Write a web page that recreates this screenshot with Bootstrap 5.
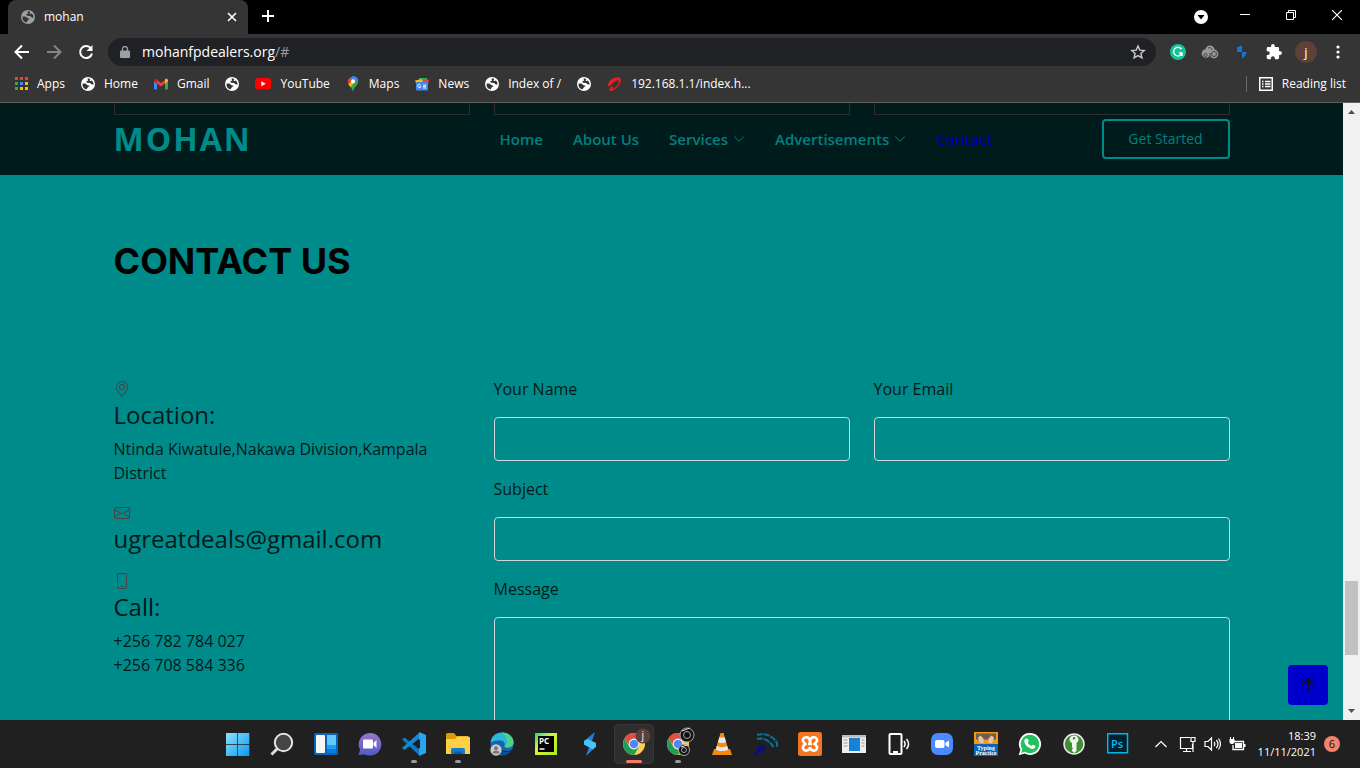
<!DOCTYPE html>
<html lang="en">
<head>
<meta charset="utf-8">
<meta name="viewport" content="width=device-width, initial-scale=1">
<title>mohan</title>
<link href="https://cdn.jsdelivr.net/npm/bootstrap@5.3.0/dist/css/bootstrap.min.css" rel="stylesheet">
<style>
:root{--teal:#008b8b;--chrome:#353535}
body{font-family:"Open Sans","Noto Sans",sans-serif;font-size:16px;line-height:24px;color:#001a1a;background:#202020}
.screen{height:100vh}
svg{flex:none;display:block}
button{color:inherit}
/* browser frame */
.ui{font-family:"Open Sans","Noto Sans",sans-serif;font-size:12px;line-height:16px;color:#fff}
.tabstrip{background:#000;height:34px}
.tab-item{background:var(--chrome);width:240px;height:34px;border-radius:8px 8px 0 0;padding:0 10px 0 13px;gap:9px}
.plain{background:none;border:0;padding:0;display:flex;align-items:center;justify-content:center}
.win{width:46px;height:30px}
.win.search{width:42px}
.toolbar{background:var(--chrome);height:36px;padding:0 6px}
.slot{width:32px;height:32px}
.omni{background:#202124;height:28px;border-radius:14px;font-size:14px;line-height:20px;padding:0 10px 0 12px;margin:0 6px}
.omni input{background:none;border:0;color:#fff;padding:0;width:133px;outline:0}
.omni span{color:#9aa0a6}
.bookmarks{background:var(--chrome);height:33px;border-bottom:1px solid #5f6060;padding:0 14px 4px}
.bookmarks a{color:#fff;text-decoration:none;gap:9px}
.marks{gap:16px}
.split{width:1px;height:16px;background:#6a6a6a}
.avatar{width:22px;height:22px;background:#5d4037;font-size:13px}
/* site */
.site{background:var(--teal)}
.site-head{background:#001b1b;height:72px}
.peek{height:12px;border:1px solid #332c2c;border-top:0}
.brand-name{font-size:32px;line-height:40px;font-weight:700;letter-spacing:2px;color:var(--teal);text-decoration:none}
.bar{padding:4px 0 16px}
.menu{gap:30px;padding-left:6px}
.menu a{font-size:15px;font-weight:600;color:#008080;text-decoration:none;gap:5px}
.menu a.active{color:#0000b0}
.start{border:2px solid var(--teal);border-radius:4px;width:128px;height:40px;font-size:14px;color:#008080;background:none}
.contact{padding-top:65px}
.contact h2{font-family:Inter,sans-serif;font-weight:700;font-size:36px;line-height:43px;color:#000;margin-bottom:94px}
.contact h4{font-size:24px;line-height:28px;font-weight:400;margin-bottom:8px}
.contact h4.alone{margin-bottom:16px}
.contact p{margin-bottom:16px}
.ico{height:24px;color:#444}
.contact label{margin-bottom:16px;display:block}
.contact .form-control{background:none;border:1px solid #ced4da;border-radius:4px;height:44px}
.contact textarea.form-control{height:240px}
.to-top{right:15px;bottom:15px;width:40px;height:40px;border-radius:4px;background:#0000cd;color:#111}
.scroll{width:17px;background:#f1f1f1}
.thumb{background:#c1c1c1;width:13px;flex:74 0 0}
/* taskbar */
.taskbar{background:#202020;height:48px;padding-right:4px}
.tray{margin-right:16px}
.clock{font-size:11px}
.side{flex:1 1 0;width:0}
.app{width:44px;height:48px}
.app.open::after{content:"";position:absolute;bottom:5px;width:6px;height:3px;border-radius:2px;background:#9a9a9a}
.app.now{background:#2d2d2d;border:1px solid #363636;border-radius:4px;width:40px;height:40px;margin:0 2px}
.app.now::after{content:"";position:absolute;bottom:0;width:16px;height:3px;border-radius:2px;background:#f47c64}
.note{width:16px;height:16px;background:#f7826a;color:#111;font-size:11px}
</style>
</head>
<body>
<svg width="0" height="0" class="position-absolute">
<defs>
<symbol id="globe" viewBox="0 0 14 14"><path fill-rule="evenodd" d="M7 0a7 7 0 1 0 0 14A7 7 0 0 0 7 0zM1.600 6.500 4 6.600c1 .1 1.600.7 1.900 1.300l1.900.6c.7.3.6 1-.1 1.300l-.5.3c-.7.3-.5 1-1.200 1.500l-.3 1A5.600 5.600 0 0 1 1.600 6.500zM6.300 1.700c1.100-.3 2.400 0 2.900.2l-.6 1.500c.5.8 1.400.6 2.200.1l.9 1c.7.9.9 2.100.8 3.100l-1.700-.2c-.8-.2-1-.9-1.800-1.300L6.400 5.800c-.9-.3-1.500-1-.8-1.600.6-.6 1.500-.3 1.600-1z"/></symbol>
<symbol id="down" viewBox="0 0 16 16"><path fill-rule="evenodd" d="M1.646 4.646a.5.5 0 0 1 .708 0L8 10.293l5.646-5.647a.5.5 0 0 1 .708.708l-6 6a.5.5 0 0 1-.708 0l-6-6a.5.5 0 0 1 0-.708z"/></symbol>
<symbol id="chromium" viewBox="0 0 24 24"><circle cx="12" cy="12" r="11" fill="#fdd04f"/><path fill="#dd5144" d="M12 12 2.500 6.500a11 11 0 0 1 19-.1z"/><path fill="#dd5144" d="M12 6.800h9.700L21 5.600A11 11 0 0 0 2.500 6.500l5 7.500z"/><path fill="#1e9e58" d="M2.500 6.500a11 11 0 0 0 9.500 16.500l5-8-5 2.200c-2 0-3.800-1-4.700-2.700z"/><circle cx="12" cy="12" r="5.400" fill="#f1f1f1"/><circle cx="12" cy="12" r="4.300" fill="#4c8bf5"/></symbol>
</defs>
</svg>
<div class="screen d-flex flex-column overflow-hidden">

<header class="ui flex-shrink-0">
  <div class="tabstrip d-flex ps-2">
    <div class="tab-item d-flex align-items-center">
      <svg width="14" height="14" fill="#9aa0a6"><use href="#globe"/></svg>
      <span class="flex-fill">mohan</span>
      <button class="plain" aria-label="Close tab"><svg width="12" height="12" stroke="#fff" stroke-width="1.600"><path d="M2 2l8 8M10 2l-8 8"/></svg></button>
    </div>
    <button class="plain slot ms-1" aria-label="New tab"><svg width="14" height="14" stroke="#fff" stroke-width="2"><path d="M7 1v12M1 7h12"/></svg></button>
    <div class="ms-auto d-flex">
      <button class="plain win search" aria-label="Search tabs"><svg width="14" height="18"><circle cx="7" cy="11" r="7" fill="#fff"/><path d="M3.500 9h7L7 13.500z" fill="#000"/></svg></button>
      <button class="plain win" aria-label="Minimize"><svg width="10" height="10"><path d="M0 4.500h10" stroke="#fff"/></svg></button>
      <button class="plain win" aria-label="Restore"><svg width="10" height="10" fill="none" stroke="#fff"><path d="M.5 2.500h7v7h-7zM2.500 2.500v-2h7v7h-2"/></svg></button>
      <button class="plain win" aria-label="Close window"><svg width="10" height="10" stroke="#fff" stroke-width="1.200"><path d="M0 0l10 10M10 0L0 10"/></svg></button>
    </div>
  </div>
  <div class="toolbar d-flex align-items-center">
    <button class="plain slot" aria-label="Back"><svg width="16" height="16" fill="none" stroke="#fff" stroke-width="2"><path d="M15 8H2M8 1.500 1.500 8 8 14.500"/></svg></button>
    <button class="plain slot" aria-label="Forward"><svg width="16" height="16" fill="none" stroke="#858585" stroke-width="2"><path d="M1 8h13M8 1.500 14.500 8 8 14.500"/></svg></button>
    <button class="plain slot" aria-label="Reload"><svg width="16" height="16" fill="none" stroke="#fff" stroke-width="2"><path d="M13 4.500A6 6 0 1 0 14 9.500"/><path d="M14.500 1v6h-6z" fill="#fff" stroke="none"/></svg></button>
    <div class="omni d-flex align-items-center flex-fill">
      <svg width="10" height="12" class="me-2"><path d="M1 4.500h8a1 1 0 0 1 1 1V11a1 1 0 0 1-1 1H1a1 1 0 0 1-1-1V5.500a1 1 0 0 1 1-1z" fill="#9aa0a6"/><path d="M2.500 5V3a2.500 2.500 0 0 1 5 0v2" fill="none" stroke="#9aa0a6" stroke-width="1.300"/></svg>
      <input class="ms-1" type="text" aria-label="Address" value="mohanfpdealers.org"><span>/#</span>
      <button class="plain ms-auto" aria-label="Bookmark this page"><svg width="16" height="16" viewBox="0 0 16 16" fill="none" stroke="#ccc" stroke-width="1.400"><path d="M8 2l1.800 4.100 4.400.4-3.300 3 1 4.400L8 11.600l-3.900 2.300 1-4.400-3.300-3 4.400-.4z"/></svg></button>
    </div>
    <div class="d-flex">
    <button class="plain slot" aria-label="Grammarly"><svg width="16" height="16"><circle cx="8" cy="8" r="8" fill="#15c39a"/><path d="M11.500 5.200A4.300 4.300 0 1 0 12 9H9M12 8.500V12" fill="none" stroke="#fff" stroke-width="1.400"/></svg></button>
    <button class="plain slot" aria-label="Extension"><svg width="18" height="14"><g fill="#999"><circle cx="9" cy="5" r="4.500"/><circle cx="5" cy="8.500" r="4.300"/><circle cx="13" cy="9" r="4.400"/></g><g fill="none" stroke="#444"><circle cx="13" cy="9" r="2.500"/><circle cx="4.500" cy="10" r="1.600"/><path d="M7 3c2-1 4 0 4 2M9 8v5"/></g></svg></button>
    <button class="plain slot" aria-label="Shield"><svg width="14" height="16"><path d="M1 2.500 7 .5l6 2c0 6-1 10-6 13C2 12.500 1 8.500 1 2.500z" fill="#2b3640"/><path d="M7 1.500V8H2.200C2 6 2 5 2 3.200zM7 8h4.700c-.5 3-2 5-4.700 6.300z" fill="#2173c8"/></svg></button>
    <button class="plain slot" aria-label="Extensions"><svg width="16" height="16" viewBox="1 1 22 22" fill="#fff"><path d="M20.500 11H19V7a2 2 0 0 0-2-2h-4V3.500a2.500 2.500 0 0 0-5 0V5H4a2 2 0 0 0-2 2v3.800h1.500a2.700 2.700 0 0 1 0 5.400H2V20a2 2 0 0 0 2 2h3.800v-1.500a2.700 2.700 0 0 1 5.400 0V22H17a2 2 0 0 0 2-2v-4h1.500a2.500 2.500 0 0 0 0-5z"/></svg></button>
    <button class="plain slot" aria-label="Profile"><span class="avatar rounded-circle d-flex align-items-center justify-content-center">j</span></button>
    <button class="plain slot" aria-label="Menu"><svg width="4" height="14" fill="#fff"><circle cx="2" cy="2" r="1.600"/><circle cx="2" cy="7" r="1.600"/><circle cx="2" cy="12" r="1.600"/></svg></button>
    </div>
  </div>
  <nav class="bookmarks d-flex align-items-center justify-content-between" aria-label="Bookmarks">
    <div class="marks d-flex">
      <a href="#" class="d-flex align-items-center"><svg width="14" height="14"><path fill="#ea4335" d="M1 0h3v3H1zM6 0h3v3H6zM11 0h3v3h-3z"/><path fill="#34a853" d="M1 5h3v3H1zM1 10h3v3H1z"/><path fill="#4285f4" d="M6 5h3v3H6z"/><path fill="#fbbc05" d="M11 5h3v3h-3zM6 10h3v3H6zM11 10h3v3h-3z"/></svg>Apps</a>
      <a href="#" class="d-flex align-items-center"><svg width="14" height="14" fill="#fff"><use href="#globe"/></svg>Home</a>
      <a href="#" class="d-flex align-items-center"><svg width="14" height="14"><path fill="#4285f4" d="M0 4l3 2v6.500H1a1 1 0 0 1-1-1z"/><path fill="#34a853" d="M14 4l-3 2v6.500h2a1 1 0 0 0 1-1z"/><path fill="#ea4335" d="M3 3l4 3 4-3v3.500l-4 3-4-3z"/><path fill="#c5221f" d="M0 3.500C0 1.800 1.800 1.200 3 2.200v4.300L0 4.400z"/><path fill="#fbbc04" d="M14 3.500c0-1.700-1.800-2.300-3-1.300v4.300l3-2.100z"/></svg>Gmail</a>
      <a href="#" aria-label="Bookmark" class="d-flex align-items-center"><svg width="14" height="14" fill="#fff"><use href="#globe"/></svg></a>
      <a href="#" class="d-flex align-items-center"><svg width="16" height="12"><rect width="16" height="11.500" rx="3" fill="#f00"/><path d="M6.300 3.200v5L10.700 5.700z" fill="#fff"/></svg>YouTube</a>
      <a href="#" class="d-flex align-items-center"><svg width="14" height="16"><path fill="#34a853" d="M2 7.500C3 10.500 6 11 7 16c.7-3.500 2-4.500 3.500-6.500C12.300 7 12.500 5 12 3.500z"/><path fill="#4285f4" d="M7 0c2.400 0 4.300 1.300 5 3.500L7 9 4 2z"/><path fill="#ea4335" d="M3.500 1.800 7 4.500 3 8.500C1.200 6 1.500 3.500 3.500 1.800z"/><path fill="#fbbc04" d="M2.500 8 8 3.500 9 6l-4.500 5z"/><circle cx="7" cy="5.200" r="2" fill="#fff"/></svg>Maps</a>
      <a href="#" class="d-flex align-items-center"><svg width="14" height="14"><path fill="#34a853" d="M4 1h8v5H4z"/><path fill="#ea4335" d="M8 3l6-.5L13 8H8z"/><path fill="#fbbc04" d="M0 3.500 7 2l1 4H1z"/><rect x="1" y="5" width="12" height="8.500" rx="1" fill="#4285f4"/><path d="M5.800 8A1.700 1.700 0 1 0 6 9.700H4.600M8 8h3.500M8 9.500h3M8 11h3.500" fill="none" stroke="#fff" stroke-width=".9"/></svg>News</a>
      <a href="#" class="d-flex align-items-center"><svg width="14" height="14" fill="#fff"><use href="#globe"/></svg>Index of /</a>
      <a href="#" aria-label="Bookmark" class="d-flex align-items-center"><svg width="14" height="14" fill="#fff"><use href="#globe"/></svg></a>
      <a href="#" class="d-flex align-items-center"><svg width="15" height="14"><path fill="#ed1c24" d="M1 7.500C2 3 7.500-.5 11.500.3c4 .9 2.500 6.700-1.500 10.200-2.500 2.300-6 4.300-7.300 3-.9-1.200.7-3.400 2.300-4 1.500-.4 1.800 1 .6 1.500-.6.300-.6.800 0 .8 2.700-.3 6.400-5 6.300-7.300-.1-1.800-3-.8-4.800.4C5 6.500 3.500 9.500 1.800 9.200.9 9 .8 8.200 1 7.500z"/></svg>192.168.1.1/index.h...</a>
    </div>
    <div class="d-flex align-items-center">
      <span class="split me-2"></span>
      <a href="#" class="d-flex align-items-center ms-1"><svg width="14" height="14" fill="none" stroke="#fff"><path stroke-width="1.500" d="M.75.75h12.500v12.500H.75z"/><path d="M3 4.500h1.500M6 4.500h5.500M3 7h1.500M6 7h5.500M3 9.500h1.500M6 9.500h5.500" stroke-width="1.400"/></svg>Reading list</a>
    </div>
  </nav>
</header>

<main class="d-flex flex-fill overflow-hidden position-relative">
  <div class="site flex-fill position-relative overflow-hidden">
    <div class="site-head">
      <div class="container">
        <div class="row">
          <div class="col-4"><div class="peek"></div></div>
          <div class="col-4"><div class="peek"></div></div>
          <div class="col-4"><div class="peek"></div></div>
        </div>
        <div class="row bar">
          <div class="col-4 d-flex"><a href="#" class="brand-name">MOHAN</a></div>
          <div class="col-8 d-flex align-items-center justify-content-between">
            <nav class="menu d-flex" aria-label="Main">
              <a href="#">Home</a>
              <a href="#">About Us</a>
              <a href="#" class="d-flex align-items-center">Services <svg width="12" height="12" fill="currentColor"><use href="#down"/></svg></a>
              <a href="#" class="d-flex align-items-center">Advertisements <svg width="12" height="12" fill="currentColor"><use href="#down"/></svg></a>
              <a href="#" class="active">Contact</a>
            </nav>
            <button class="start">Get Started</button>
          </div>
        </div>
      </div>
    </div>
    <section class="contact container">
      <h2>CONTACT US</h2>
      <div class="row">
        <div class="col-4">
          <div class="ico d-flex align-items-center"><svg width="16" height="16" fill="currentColor" viewBox="0 0 16 16"><path d="M12.166 8.940c-.524 1.062-1.234 2.120-1.960 3.070A31.493 31.493 0 0 1 8 14.580a31.481 31.481 0 0 1-2.206-2.570c-.726-.950-1.436-2.008-1.960-3.070C3.304 7.867 3 6.862 3 6a5 5 0 0 1 10 0c0 .862-.305 1.867-.834 2.940zM8 16s6-5.686 6-10A6 6 0 0 0 2 6c0 4.314 6 10 6 10z"/><path d="M8 8a2 2 0 1 1 0-4 2 2 0 0 1 0 4zm0 1a3 3 0 1 0 0-6 3 3 0 0 0 0 6z"/></svg></div>
          <h4>Location:</h4>
          <p>Ntinda Kiwatule,Nakawa Division,Kampala District</p>
          <div class="ico d-flex align-items-center"><svg width="16" height="16" fill="currentColor" viewBox="0 0 16 16"><path d="M0 4a2 2 0 0 1 2-2h12a2 2 0 0 1 2 2v8a2 2 0 0 1-2 2H2a2 2 0 0 1-2-2V4Zm2-1a1 1 0 0 0-1 1v.217l7 4.200 7-4.200V4a1 1 0 0 0-1-1H2Zm13 2.383-4.708 2.825L15 11.105V5.383Zm-.034 6.876-5.640-3.471L8 9.583l-1.326-.795-5.640 3.470A1 1 0 0 0 2 13h12a1 1 0 0 0 .966-.741ZM1 11.105l4.708-2.897L1 5.383v5.722Z"/></svg></div>
          <h4 class="alone">ugreatdeals@gmail.com</h4>
          <div class="ico d-flex align-items-center"><svg width="16" height="16" fill="currentColor" viewBox="0 0 16 16"><path d="M11 1a1 1 0 0 1 1 1v12a1 1 0 0 1-1 1H5a1 1 0 0 1-1-1V2a1 1 0 0 1 1-1h6zM5 0a2 2 0 0 0-2 2v12a2 2 0 0 0 2 2h6a2 2 0 0 0 2-2V2a2 2 0 0 0-2-2H5z"/><path d="M8 14a1 1 0 1 0 0-2 1 1 0 0 0 0 2z"/></svg></div>
          <h4>Call:</h4>
          <p>+256 782 784 027<br>+256 708 584 336</p>
        </div>
        <form class="col-8">
          <div class="row mb-3">
            <div class="col-6"><label for="name">Your Name</label><input id="name" type="text" class="form-control"></div>
            <div class="col-6"><label for="email">Your Email</label><input id="email" type="email" class="form-control"></div>
          </div>
          <div class="mb-3"><label for="subject">Subject</label><input id="subject" type="text" class="form-control"></div>
          <div><label for="message">Message</label><textarea id="message" class="form-control"></textarea></div>
        </form>
      </div>
    </section>
    <button class="to-top plain position-absolute" aria-label="Back to top"><svg width="28" height="28" fill="currentColor" viewBox="0 0 16 16"><path fill-rule="evenodd" d="M8 12a.5.5 0 0 0 .5-.5V5.707l2.146 2.147a.5.5 0 0 0 .708-.708l-3-3a.5.5 0 0 0-.708 0l-3 3a.5.5 0 1 0 .708.708L7.500 5.707V11.500a.5.5 0 0 0 .5.5z"/></svg></button>
  </div>
  <div class="scroll d-flex flex-column align-items-center flex-shrink-0" aria-hidden="true">
    <svg width="17" height="17"><path d="M5 11h7L8.500 7z" fill="#505050"/></svg>
    <div style="flex:461 0 0"></div>
    <div class="thumb"></div>
    <div style="flex:48 0 0"></div>
    <svg width="17" height="17"><path d="M5 6h7L8.500 10z" fill="#505050"/></svg>
  </div>
</main>

<footer class="taskbar ui d-flex align-items-center flex-shrink-0">
  <div class="side"></div>
  <div class="d-flex align-items-center">
    <button class="plain app" aria-label="Start"><svg width="24" height="24"><defs><linearGradient id="w" x1="0" y1="0" x2="1" y2="1"><stop stop-color="#8be4ff"/><stop offset="1" stop-color="#0a98ee"/></linearGradient></defs><path d="M0 1h11.300v11H0zM12 1h11.300v11H12zM0 12.800h11.300V24H0zM12 12.800h11.300V24H12z" fill="url(#w)"/></svg></button>
    <button class="plain app" aria-label="Search"><svg width="24" height="24"><path d="M8 16l-6.500 6.500" stroke="#ddd" stroke-width="3"/><circle cx="13.500" cy="10.500" r="8.700" fill="#454545" stroke="#e4e4e4" stroke-width="2"/></svg></button>
    <button class="plain app" aria-label="Widgets"><svg width="24" height="24"><rect y="1" width="24" height="22" rx="1" fill="#0c62b4"/><rect x="2" y="3" width="9" height="18" rx="1" fill="#f6f6f6"/><path d="M13 3h9v10h-9z" fill="#61c9ff"/><path d="M13 13h9v4h-9z" fill="#1ba1f2"/><path d="M13 17h9v4h-9z" fill="#0a7ddb"/></svg></button>
    <button class="plain app" aria-label="Chat"><svg width="24" height="24"><defs><linearGradient id="t" x1="0" y1="0" x2="0" y2="1"><stop stop-color="#9a78c9"/><stop offset="1" stop-color="#5059c9"/></linearGradient></defs><path d="M12 1a11.300 11.300 0 1 1-5 21.400L.5 23l1.600-5A11.400 11.400 0 0 1 12 1z" fill="url(#t)"/><rect x="5" y="7.500" width="10" height="9" rx="1" fill="#fff"/><path d="M15.500 11 18.500 8v8l-3-3z" fill="#fff"/></svg></button>
    <button class="plain app open" aria-label="Visual Studio Code"><svg width="24" height="24"><path d="M0 7.500 2.500 5.500 18 18v6z" fill="#0b79c4"/><path d="M0 16l2.500 2L18 6V0z" fill="#1288d4"/><path d="M17 0l7 3v18l-7 3z" fill="#29a4ee"/><path d="M18 7.500v9L11.500 12z" fill="#202020"/></svg></button>
    <button class="plain app open" aria-label="File Explorer"><svg width="24" height="24"><path d="M0 2.500A1.500 1.500 0 0 1 1.500 1H8l2.500 3H22v5H0z" fill="#dc9a0b"/><path d="M0 7h9l2-2.500h11.500A1.500 1.500 0 0 1 24 6v16H0z" fill="#ffcf48"/><path d="M5 22v-4.500A1.500 1.500 0 0 1 6.500 16h11a1.500 1.500 0 0 1 1.500 1.500V22z" fill="#157bd0"/><path d="M8 22v-2.500h8V22z" fill="#0b5aa6"/></svg></button>
    <button class="plain app" aria-label="Edge"><svg width="24" height="24"><circle cx="12" cy="12" r="11.500" fill="#1464b4"/><path d="M.6 11C1 4 6 .5 12 .5c7 0 11.800 5 11.500 10-.2 3.500-3 5.200-5.800 5.200-2 0-3.600-.6-3.200-1.700.7-1.800.3-5-3.500-5.400C6 8 2 9 .6 11z" fill="#2bb7d8"/><path d="M12 .5c7 0 11.800 5 11.500 10-.2 3.500-3 5.200-5.800 5.200-2 0-3.600-.6-3.200-1.700C19 12 17 4 12 .5z" fill="#4dd08c"/><path d="M9 13c0 5 6 7.500 12.500 5.300L24 17v7H12z" fill="#202020"/><path d="M9 12c-1 6 6 10 12 6.500-2 4-6 5.500-10 5z" fill="#0c4f96"/><circle cx="6" cy="18" r="5.700" fill="#c9c9c9"/><circle cx="6" cy="16.300" r="2" fill="#777"/><path d="M2.500 21.500c0-4 7-4 7 0z" fill="#777"/></svg></button>
    <button class="plain app" aria-label="PyCharm"><svg width="24" height="24"><defs><linearGradient id="p" x1="0" y1="0" x2="1" y2="1"><stop stop-color="#21d789"/><stop offset=".4" stop-color="#d8f23a"/><stop offset="1" stop-color="#a7ea1f"/></linearGradient></defs><path d="M1 1h22v22H1z" fill="url(#p)"/><path d="M4 4h16v16H4z" fill="#000"/><text x="5" y="12" font-family="Open Sans" font-weight="700" font-size="8" fill="#fff">PC</text><path d="M5.500 17h5" stroke="#fff" stroke-width="1.500"/></svg></button>
    <button class="plain app" aria-label="Stream"><svg width="24" height="24"><path d="M17 0 6 9v3.500l4.500 2L14 9z" fill="#1f7fe0"/><path d="M8 24l10-9.500V11l-4-1.500-3 6z" fill="#2a86e6"/><path d="M6 9v3.500l9 5 3-3V11L9.500 7z" fill="#45c4f7"/></svg></button>
    <button class="plain app now position-relative" aria-label="Chrome, profile j"><svg width="36" height="36" viewBox="0 0 36 36"><use href="#chromium" x="6" y="6" width="24" height="24"/><circle cx="27" cy="10" r="7.500" fill="#5d4037"/><text x="25.500" y="13" font-family="Open Sans" font-size="10" fill="#fff">j</text></svg></button>
    <button class="plain app open" aria-label="Chrome, second profile"><svg width="36" height="36" viewBox="0 0 36 36"><use href="#chromium" x="6" y="6" width="24" height="24"/><g fill="#111" stroke="#aaa"><circle cx="27" cy="9" r="7"/><circle cx="24" cy="24" r="5.500"/><circle cx="27" cy="9" r="3.500"/><circle cx="24" cy="24" r="2.500"/><path d="M22 5l8-3M21 21l6-2" stroke="#ddd"/></g></svg></button>
    <button class="plain app" aria-label="VLC"><svg width="24" height="24"><path d="M4 17h16l2 6H2z" fill="#f28a0c"/><path d="M10.500 1h3l5 17c-3 2.500-10 2.500-13 0z" fill="#f58a1a"/><path d="M9.300 5.500h5.400l1.300 4.500c-2 1.300-6 1.300-8 0zM6.800 14c3 1.500 7.500 1.500 10.400 0l1 3.500c-3 2-9.500 2-12.400 0z" fill="#e8e8e8"/></svg></button>
    <button class="plain app" aria-label="MySQL Workbench"><svg width="26" height="24" fill="none"><path d="M4 3c5-2 15-1 20 8v4M4 7c7-2 13 2 17 9" stroke="#0b7296" stroke-width="2" stroke-dasharray="6 1"/><path d="M1 23l4-5 6-5M4 19l5 1 3-5M5 18l2-5" stroke="#0a0a8c" stroke-width="2.200"/></svg></button>
    <button class="plain app" aria-label="XAMPP"><svg width="24" height="24"><rect width="24" height="24" rx="2.500" fill="#f37623"/><path d="M12 9c-1-6-8-4-7 0 .4 1.500 2 2 2.500 3-1.500 1-3 2-2.500 4 1 4 7 3 7-1 0 4 6 5 7 1 .5-2-1-3-2.500-4 .5-1 2.100-1.500 2.500-3 1-4-6-6-7 0v2M10 12h4" fill="none" stroke="#fff" stroke-width="2.600"/></svg></button>
    <button class="plain app" aria-label="Window"><svg width="24" height="24"><path d="M0 3h24v18H0z" fill="#eee"/><path d="M0 3h24v2.500H0z" fill="#bbb"/><path d="M7 6h11v13H7z" fill="#1683d8"/><path d="M1.500 8h4M1.500 11h4M1.500 14h4M19.500 8h3M19.500 11h3M19.500 14h3" stroke="#999"/></svg></button>
    <button class="plain app" aria-label="Your Phone"><svg width="24" height="24" fill="none" stroke="#fff"><rect x="3.500" y="2" width="12" height="20" rx="1" stroke-width="2"/><path d="M7 20h5" stroke-width="2"/><path d="M18 9c1.500 2 1.500 4 0 6M20.500 7c2.500 3 2.500 7 0 10" stroke-width="1.500"/></svg></button>
    <button class="plain app" aria-label="Zoom"><svg width="24" height="24"><rect x="1" y="1" width="22" height="22" rx="7" fill="#4a8cff"/><rect x="5" y="8" width="9.500" height="8" rx="2" fill="#fff"/><path d="M15.300 11 19 8.500v7L15.300 13z" fill="#fff"/></svg></button>
    <button class="plain app" aria-label="Typing Practice"><svg width="24" height="24"><path d="M0 0h24v12H0z" fill="#f39a12"/><path d="M2 1.500h20v6H2z" fill="#6d5d50"/><path d="M4 5.500l2.500-2 3 3v4.500H6zM20 5.500l-2.500-2-3 3v4.500H18z" fill="#edc3a8"/><path d="M0 12h24v12H0z" fill="#0c63b8"/><text x="12" y="17.500" text-anchor="middle" font-family="Liberation Serif" font-weight="700" font-size="6" fill="#fff">Typing</text><text x="12" y="22.500" text-anchor="middle" font-family="Liberation Serif" font-weight="700" font-size="6" fill="#fff">Practice</text></svg></button>
    <button class="plain app" aria-label="WhatsApp"><svg width="24" height="24"><path d="M12 1a11 11 0 1 1-5.300 20.600L.7 23.300l1.700-5.800A11 11 0 0 1 12 1z" fill="#fff"/><path d="M12 2.800a9.200 9.200 0 1 1-4.900 17L3.200 20.900l1.100-3.800A9.200 9.200 0 0 1 12 2.800z" fill="#22c35e"/><path d="M8 6.500l1.800.2 1 2.600-1.100 1.300c1 1.800 2 2.700 3.800 3.500l1.400-1.500 2.600 1.300c0 2-1.600 3.100-3.300 3-4-.5-8-4.400-7.900-7.800 0-1.200.7-2.200 1.700-2.600z" fill="#fff"/></svg></button>
    <button class="plain app" aria-label="KeePass"><svg width="24" height="24"><circle cx="12" cy="12" r="10" fill="#3f8f35" stroke="#eee" stroke-width="1.500"/><path d="M12 3.500c2.500 0 4.500 1.700 4.500 4 0 1.600-.8 2.800-2 3.400V19L12.300 21 10 19v-1.500l1-1-1-1.500v-4.100c-1.500-.7-2.500-1.800-2.500-3.400 0-2.300 2-4 4.500-4z" fill="#f4f4f4"/><circle cx="12" cy="6.300" r="1.200" fill="#3f8f35"/></svg></button>
    <button class="plain app" aria-label="Photoshop"><svg width="24" height="24"><path d="M1.700 1.700h19.800v19H1.700z" fill="#021e2f" stroke="#00b4ee" stroke-width="1.500"/><text x="5" y="15.500" font-family="Open Sans" font-weight="600" font-size="11" fill="#00c0f8">Ps</text></svg></button>
  </div>
  <div class="side d-flex"><div class="tray d-flex align-items-center ms-auto">
    <button class="plain me-2 pe-1" aria-label="Show hidden icons"><svg width="12" height="8" fill="none" stroke="#fff" stroke-width="1.200"><path d="M.5 7 6 1.500 11.500 7"/></svg></button>
    <button class="plain me-2" aria-label="Network"><svg width="17" height="17" fill="none" stroke="#fff" stroke-width="1.200"><path d="M11 1.500H1.500v11h12V8M7.500 12.500V15M4 15.500h8M12 1.500h4v4h-4zM14 5.500V16"/></svg></button>
    <button class="plain me-2" aria-label="Volume"><svg width="17" height="16" fill="none" stroke="#fff" stroke-width="1.200"><path d="M1 5.500h3L7.500 2v12L4 10.500H1zM10 6c1 1.200 1 2.800 0 4M12.300 4c2 2.400 2 5.600 0 8M14.500 2.500c2.500 3.500 2.500 7.500 0 11"/></svg></button>
    <button class="plain me-2" aria-label="Battery"><svg width="17" height="16"><path d="M5 5.500h9.500v8H4V9" fill="none" stroke="#fff" stroke-width="1.300"/><path d="M6 7h7v5H6zM15 8h1.500v3H15zM.5 3h5v3.500l-1.500 1.500H2L.5 6.500z" fill="#fff"/><path d="M1.500 1v2M4.500 1v2" stroke="#fff"/></svg></button>
    <button class="plain clock text-end d-block ms-1 me-2">18:39<br>11/11/2021</button>
    <span class="note rounded-circle d-flex align-items-center justify-content-center">6</span>
  </div></div>
</footer>
</div>
<script src="https://cdn.jsdelivr.net/npm/bootstrap@5.3.0/dist/js/bootstrap.bundle.min.js"></script>
</body>
</html>
